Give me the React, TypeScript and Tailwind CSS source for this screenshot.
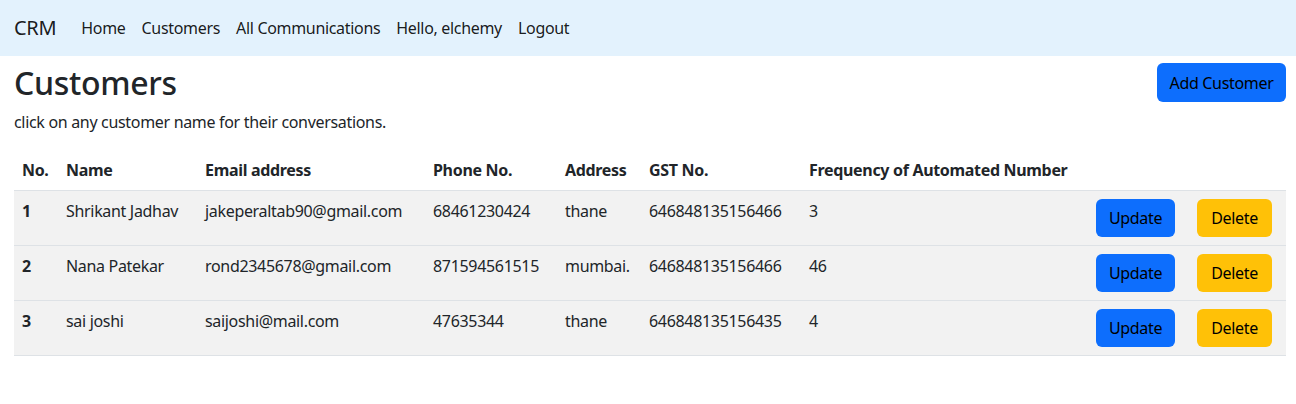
import React from 'react';

const customers = [
  { no: 1, name: 'Shrikant Jadhav', email: 'jakeperaltab90@gmail.com', phone: '68461230424', address: 'thane', gst: '646848135156466', freq: '3' },
  { no: 2, name: 'Nana Patekar', email: 'rond2345678@gmail.com', phone: '871594561515', address: 'mumbai.', gst: '646848135156466', freq: '46' },
  { no: 3, name: 'sai joshi', email: 'saijoshi@mail.com', phone: '47635344', address: 'thane', gst: '646848135156435', freq: '4' },
];

const App = () => {
  return (
    <div
      className="min-h-[404px] bg-white text-[#212529] text-base tracking-[-0.02em]"
      style={{ fontFamily: '"Noto Sans", sans-serif' }}
    >
      {/* Navbar */}
      <nav className="h-14 bg-[#e3f2fd] flex items-center px-[14px]">
        <span className="text-xl text-black/90 mr-[17px]">CRM</span>
        <ul className="flex">
          {['Home', 'Customers', 'All Communications', 'Hello, elchemy', 'Logout'].map((item) => (
            <li key={item} className="px-2 text-black/90 leading-6">
              {item}
            </li>
          ))}
        </ul>
      </nav>

      <div className="pl-[14px] pr-[10px]">
        {/* Title row */}
        <div className="mt-[7px] flex justify-between items-center">
          <h2 className="text-[32px] leading-[39px] font-medium">Customers</h2>
          <button className="w-[129px] h-[39px] rounded-md bg-[#0d6efd] text-black leading-6">Add Customer</button>
        </div>
        <p className="mt-2 mb-4 leading-6">click on any customer name for their conversations.</p>

        {/* Table */}
        <table className="w-[1272px] table-fixed border-collapse">
          <colgroup>
            <col className="w-[44px]" />
            <col className="w-[139px]" />
            <col className="w-[228px]" />
            <col className="w-[132px]" />
            <col className="w-[84px]" />
            <col className="w-[160px]" />
            <col className="w-[287px]" />
            <col className="w-[101px]" />
            <col className="w-[97px]" />
          </colgroup>
          <thead>
            <tr className="border-b border-[#dee2e6]">
              {['No.', 'Name', 'Email address', 'Phone No.', 'Address', 'GST No.', 'Frequency of Automated Number', '', ''].map((h, i) => (
                <th key={i} className="p-2 text-left font-bold leading-6 whitespace-nowrap">
                  {h}
                </th>
              ))}
            </tr>
          </thead>
          <tbody>
            {customers.map((c) => (
              <tr key={c.no} className="bg-[#f2f2f2] border-b border-[#dee2e6] align-top">
                <td className="p-2 font-bold leading-6">{c.no}</td>
                <td className="p-2 leading-6">{c.name}</td>
                <td className="p-2 leading-6">{c.email}</td>
                <td className="p-2 leading-6">{c.phone}</td>
                <td className="p-2 leading-6">{c.address}</td>
                <td className="p-2 leading-6">{c.gst}</td>
                <td className="p-2 leading-6">{c.freq}</td>
                <td className="p-2">
                  <button className="w-[79px] h-[38px] rounded-md bg-[#0d6efd] text-black leading-6">Update</button>
                </td>
                <td className="p-2">
                  <button className="w-[75px] h-[38px] rounded-md bg-[#ffc107] text-black leading-6">Delete</button>
                </td>
              </tr>
            ))}
          </tbody>
        </table>
      </div>
    </div>
  );
};

export default App;
